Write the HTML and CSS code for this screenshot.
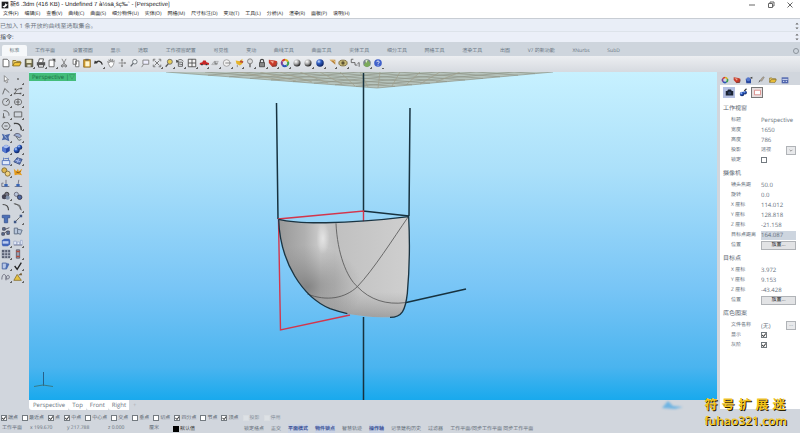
FILE: index.html
```html
<!DOCTYPE html>
<html lang="zh-CN">
<head>
<meta charset="utf-8">
<title>Undefined 7 - [Perspective]</title>
<link rel="stylesheet" href="styles.css">
</head>
<body>
<svg class="defs" aria-hidden="true">
  <defs>
    <radialGradient id="gray" cx=".35" cy=".3" r=".7"><stop offset="0" stop-color="#fff"/><stop offset=".5" stop-color="#aaa"/><stop offset="1" stop-color="#222"/></radialGradient>
    <radialGradient id="blue" cx=".35" cy=".3" r=".7"><stop offset="0" stop-color="#cfe0ff"/><stop offset=".4" stop-color="#2f5fc4"/><stop offset="1" stop-color="#0b2160"/></radialGradient>
    <symbol id="wheel" viewBox="0 0 12 12"><g fill="none" stroke-width="2.4"><path d="M6 2.2A3.8 3.8 0 0 1 9.5 4.5" stroke="#d8b21c"/><path d="M9.5 4.5A3.8 3.8 0 0 1 8 9.2" stroke="#3fa04c"/><path d="M8 9.2A3.8 3.8 0 0 1 3 8.4" stroke="#2d56b8"/><path d="M3 8.4A3.8 3.8 0 0 1 2.8 4" stroke="#7a3f96"/><path d="M2.8 4A3.8 3.8 0 0 1 6 2.2" stroke="#d33a2c"/></g></symbol>
    <symbol id="layers" viewBox="0 0 12 12"><path d="M1 2l7 1 3 1-1 6-5 .5L1 6z" fill="#c63b2b"/><path d="M2 3l5 1-1 3z" fill="#f0a58f"/><path d="M5 10l5-.5 1-4" fill="none" stroke="#5d3a38"/></symbol>
    <symbol id="folder" viewBox="0 0 12 12"><path d="M1 9.5V3h3.500l1 1H10v1.500" fill="#f3d774" stroke="#80671f"/><path d="M1 9.500l2-4h8l-2 4z" fill="#f5c83c" stroke="#80671f"/></symbol>
    <symbol id="lens" viewBox="0 0 12 12"><circle cx="7" cy="4.500" r="2.700" fill="#eef3f6" stroke="#62686e"/><path d="M5 6.500L2 10" stroke="#62686e" stroke-width="1.600"/></symbol>
  </defs>
</svg>

<header class="titlebar">
  <svg class="logo" viewBox="0 0 12 12"><path d="M1 1h10v10H1z" fill="#222"/><path d="M2 8c3 0 4-2 5-5l1 2 2 0-2 3-3 2z" fill="#fff"/></svg>
  <h1>新6 .3dm (416 KB) - Undefined 7 à½sä¸šç‰ˆ - [Perspective]</h1>
  <div class="winbtns">
    <button aria-label="Minimize"><svg viewBox="0 0 8 8"><path d="M1 4h6"/></svg></button>
    <button aria-label="Restore"><svg viewBox="0 0 8 8"><path d="M1.500 2.500h4v4h-4zM3 2V1h4v4H6"/></svg></button>
    <button aria-label="Close"><svg viewBox="0 0 8 8"><path d="M1.500 1.500l5 5M6.500 1.500l-5 5"/></svg></button>
  </div>
</header>

<nav class="menubar">
  <button>文件(F)</button><button>编辑(E)</button><button>查看(V)</button><button>曲线(C)</button><button>曲面(S)</button><button>细分物件(U)</button><button>实体(O)</button><button>网格(M)</button><button>尺寸标注(D)</button><button>变动(T)</button><button>工具(L)</button><button>分析(A)</button><button>渲染(R)</button><button>面板(P)</button><button>说明(H)</button>
</nav>

<section class="command">
  <div class="history"><p>已加入 1 条开放的曲线至选取集合。</p><svg class="spin" viewBox="0 0 4 10"><path d="M0 3l2-2 2 2zM0 7l2 2 2-2z"/></svg></div>
  <div class="prompt"><label for="cmd">指令:</label><input id="cmd" type="text"><svg class="spin" viewBox="0 0 4 10"><path d="M0 3l2-2 2 2zM0 7l2 2 2-2z"/></svg></div>
</section>

<nav class="tabbar">
  <button class="active">标准</button>
  <div class="tabs"><button>工作平面</button><button>设置视图</button><button>显示</button><button>选取</button><button>工作视窗配置</button><button>可见性</button><button>变动</button><button>曲线工具</button><button>曲面工具</button><button>实体工具</button><button>细分工具</button><button>网格工具</button><button>渲染工具</button><button>出图</button><button>V7 的新功能</button><button>XNurbs</button><button>SubD</button></div>
  <button class="gear" aria-label="Options"><svg viewBox="0 0 8 8"><circle cx="4" cy="4" r="2.500" fill="none" stroke="#8c949c"/></svg></button>
</nav>

<div class="toolbar">
  <div class="icons">
    <button aria-label="New"><svg viewBox="0 0 12 12"><path d="M2.500 1.500h5l2 2v7h-7z" fill="#fff" stroke="#555"/></svg></button>
    <button aria-label="Open"><svg><use href="#folder"/></svg></button>
    <button class="more" aria-label="Save"><svg viewBox="0 0 12 12"><path d="M1.500 1.500h9v9h-9z" fill="#77724d" stroke="#44453c"/><path d="M3 2h6v4H3z" fill="#e9e6c8"/><path d="M4 8h4v2.500H4z" fill="#ddd"/></svg></button>
    <button class="more" aria-label="Print"><svg viewBox="0 0 12 12"><path d="M3 5l1-4h5l-1 4" fill="#fff" stroke="#444"/><path d="M1 5h10v4H1z" fill="#555"/><path d="M3 8h6v3H3z" fill="#eee" stroke="#444"/></svg></button>
    <button class="more" aria-label="Properties"><svg viewBox="0 0 12 12"><path d="M2.500 2.500h6v8h-6z" fill="#fff" stroke="#555"/><path d="M6 1h4v4L8 3z" fill="#555"/></svg></button>
    <button aria-label="Cut"><svg viewBox="0 0 12 12"><path d="M3.500 1l4 7.500M8.500 1l-4 7.500" stroke="#777" fill="none"/><circle cx="4" cy="9.500" r="1.200" fill="none" stroke="#555"/><circle cx="8" cy="9.500" r="1.200" fill="none" stroke="#555"/></svg></button>
    <button aria-label="Copy"><svg viewBox="0 0 12 12"><path d="M2.500 1.500h4v6h-4zM5.500 3.500h4v7h-4z" fill="#fff" stroke="#666"/></svg></button>
    <button aria-label="Paste"><svg viewBox="0 0 12 12"><path d="M2 2h8v9H2z" fill="#d39c2a" stroke="#8f6c25"/><path d="M4 1h4v2H4z" fill="#666"/><path d="M4 4h5v6H4z" fill="#fff6cf"/></svg></button>
    <button class="more" aria-label="Undo"><svg viewBox="0 0 12 12"><path d="M2 6c3-4 7-2 8 2" fill="none" stroke="#333" stroke-width="1.500"/><path d="M0 7l1-4 4 3z" fill="#333"/></svg></button>
    <button aria-label="Pan"><svg viewBox="0 0 12 12"><path d="M3 7L2 4l2 2-.5-4L5.500 5V1l1.500 4 1-3.500V5l2-2-1 5-2 3H5z" fill="#fff" stroke="#777" stroke-width=".8"/></svg></button>
    <button aria-label="Rotate view"><svg viewBox="0 0 12 12"><path d="M6 1.500v9M2 6h8" stroke="#888"/><path d="M4.500 3L6 1l1.500 2zM4.500 9L6 11l1.500-2zM9 4.500L11 6 9 7.500z" fill="#777"/></svg></button>
    <button aria-label="Zoom dynamic"><svg><use href="#lens"/></svg></button>
    <button aria-label="Zoom window"><svg viewBox="0 0 12 12"><path d="M3.500 2.500h7v5h-7zM4 8l-2 3" fill="#eef" stroke="#777"/></svg></button>
    <button class="more" aria-label="Zoom extents"><svg viewBox="0 0 12 12"><path d="M1.500 4V1.500H4M8 1.500h2.500V4M10.500 8v2.500H8M4 10.500H1.500V8M3 9l6-6M3 3l6 6" fill="none" stroke="#666"/></svg></button>
    <button class="more" aria-label="Zoom selected"><svg viewBox="0 0 12 12"><circle cx="7" cy="4.500" r="3" fill="#e5cc56" stroke="#666"/><path d="M5 7l-3 3.500" stroke="#555" stroke-width="1.600"/></svg></button>
    <button class="more" aria-label="Undo view"><svg viewBox="0 0 12 12"><path d="M2 5c2-4 6-4 8-1M4 5h5v5H4zM4 7l5 1" fill="none" stroke="#555"/><path d="M1 2l1 4 3-2z" fill="#444"/></svg></button>
    <button class="more" aria-label="Four viewports"><svg viewBox="0 0 12 12"><path d="M1.500 1.500h9v9h-9zM6 1.500v9M1.500 6h9" fill="#f3f3f3" stroke="#444"/></svg></button>
    <button class="more" aria-label="Right view"><svg viewBox="0 0 12 12"><path d="M1 6l3-1 1-2h3l1 2 3 1v2H1z" fill="#c62525"/><path d="M2.500 8h2M8 8h2" stroke="#333" stroke-width="1.500"/></svg></button>
    <button class="more" aria-label="CPlane"><svg viewBox="0 0 12 12"><path d="M2 8l3-4h5L8 8z" fill="#c9ccd0" stroke="#999" stroke-width=".6"/><path d="M6 4v3h3" fill="none" stroke="#666"/></svg></button>
    <button class="more" aria-label="Object snap"><svg viewBox="0 0 12 12"><circle cx="5.500" cy="6" r="4" fill="#f1f1f1" stroke="#999"/><path d="M4 6h7" stroke="#777"/></svg></button>
    <button class="more" aria-label="Select"><svg viewBox="0 0 12 12"><path d="M2 3l5 1 3-3v6L7 9 3 7z" fill="#e6b429"/><path d="M7 4l4 1" stroke="#bb4a34" stroke-width="2"/><path d="M4 8v3" stroke="#888"/></svg></button>
    <button class="more" aria-label="Lights"><svg viewBox="0 0 12 12"><circle cx="6" cy="4" r="3" fill="#ddd" stroke="#777"/><path d="M5 7h2v4H5z" fill="#777"/></svg></button>
    <button class="more" aria-label="Lock"><svg viewBox="0 0 12 12"><path d="M4 6V3.500C4 1 8 1 8 3.500V6" fill="none" stroke="#444" stroke-width="1.300"/><path d="M3 5.500h6v5H3z" fill="#888" stroke="#444"/></svg></button>
    <button class="more" aria-label="Layers"><svg><use href="#layers"/></svg></button>
    <button class="more" aria-label="Colors"><svg><use href="#wheel"/></svg></button>
    <button aria-label="Shade"><svg viewBox="0 0 12 12"><circle cx="6" cy="6" r="4.200" fill="url(#gray)"/></svg></button>
    <button class="more" aria-label="Shade selected"><svg viewBox="0 0 12 12"><circle cx="6" cy="6" r="4.200" fill="url(#gray)"/></svg></button>
    <button class="more" aria-label="Render"><svg viewBox="0 0 12 12"><circle cx="6" cy="6" r="4.500" fill="url(#blue)"/></svg></button>
    <button class="more" aria-label="Spotlight"><svg viewBox="0 0 12 12"><path d="M3 2h7v6z" fill="#b9853f"/><path d="M4 2.500h4l2 3" fill="none" stroke="#efd294"/></svg></button>
    <button class="more" aria-label="Options"><svg viewBox="0 0 12 12"><ellipse cx="6" cy="6" rx="5" ry="3.500" fill="#c5b877" stroke="#77683c"/><circle cx="6" cy="6" r="2" fill="#5d5334"/></svg></button>
    <button aria-label="Dimension"><svg viewBox="0 0 12 12"><path d="M4 1.500H1.500v4H6v3h3M9 6.500l2-1v5" fill="none" stroke="#555"/></svg></button>
    <button class="more" aria-label="Earth"><svg viewBox="0 0 12 12"><circle cx="6" cy="6" r="4.600" fill="#7b8791"/><path d="M2 9l4-7 3 3 1 4-4 2z" fill="#7cab5c"/><path d="M4 3l3-1-2 4z" fill="#e9eddc"/></svg></button>
    <button class="more" aria-label="Help"><svg viewBox="0 0 12 12"><circle cx="6" cy="6" r="4.600" fill="#4060ca"/><path d="M4.500 5c0-2 3-2 3 0 0 1-1.500 1-1.500 2M6 8v1.200" fill="none" stroke="#fff"/></svg></button>
  </div>
</div>

<main>
  <aside class="tools">
    <div class="icons">
      <button aria-label="Select"><svg viewBox="0 0 12 12"><path d="M4 2l5 5H6.500l1.500 3-1.500.5L5 7.500 4 9z" fill="#fff" stroke="#666" stroke-width=".8"/></svg></button>
      <button class="more" aria-label="Point"><svg viewBox="0 0 12 12"><circle cx="6" cy="6" r="1.100" fill="#666"/></svg></button>
      <button class="more" aria-label="Polyline"><svg viewBox="0 0 12 12"><path d="M2 10l2.500-7L10 8" fill="none" stroke="#555"/></svg></button>
      <button class="more" aria-label="Curve"><svg viewBox="0 0 12 12"><path d="M2 9c2-1 1-6 8-6M3 9h6" fill="none" stroke="#555"/><path d="M1 8h2v2H1zM9 2h2v2H9zM2 3h2v2H2zM8 8h2v2H8z" fill="#555"/></svg></button>
      <button class="more" aria-label="Circle"><svg viewBox="0 0 12 12"><circle cx="6" cy="6" r="4.200" fill="none" stroke="#666"/><path d="M6 6l3-3" stroke="#555"/></svg></button>
      <button class="more" aria-label="Ellipse"><svg viewBox="0 0 12 12"><ellipse cx="6" cy="6" rx="4.500" ry="3.500" fill="none" stroke="#666"/><path d="M6 2v8M3 6h5" stroke="#555"/></svg></button>
      <button class="more" aria-label="Arc"><svg viewBox="0 0 12 12"><path d="M3 2c5-.5 7 3 6.500 6M3 10V5" fill="none" stroke="#555"/><path d="M2 9h3v2H2z" fill="#777"/></svg></button>
      <button class="more" aria-label="Rectangle"><svg viewBox="0 0 12 12"><path d="M1.500 3.500h9v6h-9z" fill="none" stroke="#555"/></svg></button>
      <button class="more" aria-label="Polygon"><svg viewBox="0 0 12 12"><path d="M3.500 2h5L11 6l-2.500 4h-5L1 6zM4 6h4" fill="none" stroke="#555"/></svg></button>
      <button class="more" aria-label="Fillet curve"><svg viewBox="0 0 12 12"><path d="M1 3c6-1 9 2 9 8" fill="none" stroke="#444" stroke-width="1.600"/></svg></button>
      <button class="more" aria-label="Surface"><svg viewBox="0 0 12 12"><path d="M1 2l4 1.500L11 2 9 6l1 5-5-2-4 1 1.500-4z" fill="#4a68a8"/><path d="M4 4l3 4" stroke="#b9caee"/></svg></button>
      <button class="more" aria-label="Loft"><svg viewBox="0 0 12 12"><path d="M1 4c3-4 8-2 9 1L8 7z" fill="#9db0d5" stroke="#556"/><path d="M4 6l3 4 3-1" fill="none" stroke="#566"/></svg></button>
      <button class="more" aria-label="Box"><svg viewBox="0 0 12 12"><path d="M1.500 3.500L6 1l4.500 2v5.500L6 11 1.500 8.500z" fill="#2848a8"/><path d="M1.500 3.500L6 1l4.500 2L6 5.500z" fill="#a9beee"/><path d="M1.500 3.500L6 5.500V11L1.500 8.500z" fill="#5578d0"/></svg></button>
      <button class="more" aria-label="Boolean"><svg viewBox="0 0 12 12"><circle cx="4.500" cy="7.500" r="3.500" fill="url(#blue)"/><circle cx="8" cy="4" r="3" fill="url(#blue)"/></svg></button>
      <button class="more" aria-label="Extrude"><svg viewBox="0 0 12 12"><path d="M1.500 5.500h9v5h-9z" fill="#e1eafa" stroke="#4266b8"/><path d="M4 3h5M3 2v3M9 2v3" stroke="#5775bd"/></svg></button>
      <button class="more" aria-label="Mesh surface"><svg viewBox="0 0 12 12"><path d="M1 7l4-5 6 2-3 6z" fill="#6079bb" stroke="#304779"/><path d="M3 5l6 2M7 3L5 8" stroke="#b7c6ee"/></svg></button>
      <button class="more" aria-label="Trim"><svg viewBox="0 0 12 12"><circle cx="4" cy="4" r="3" fill="#ddb44c" stroke="#7b6530"/><circle cx="8" cy="8" r="3" fill="#f0d280" stroke="#7b6530"/></svg></button>
      <button aria-label="Explode"><svg viewBox="0 0 12 12"><path d="M1 2l3 3 2-3 1 3 4-3-2 5 2 3-5-1-4 1z" fill="#e59b1d"/><path d="M4 6l3 1 2-2" stroke="#704a13" fill="none"/></svg></button>
      <button aria-label="Join"><svg viewBox="0 0 12 12"><path d="M6 1v6M3 5H1v4h9" fill="none" stroke="#667"/><path d="M4 6h4v3H4z" fill="#3765b6"/></svg></button>
      <button aria-label="Split"><svg viewBox="0 0 12 12"><path d="M7 1L6 7M2 9h9" fill="none" stroke="#667"/><path d="M4 6h4v3H4z" fill="#3765b6"/></svg></button>
      <button class="more" aria-label="Group"><svg viewBox="0 0 12 12"><circle cx="4" cy="7" r="3" fill="#445"/><circle cx="7" cy="4" r="2.500" fill="#778" stroke="#333"/><circle cx="8" cy="8" r="2.500" fill="#8192ab"/></svg></button>
      <button aria-label="Ungroup"><svg viewBox="0 0 12 12"><circle cx="4" cy="4" r="2.500" fill="#b8c4d9" stroke="#667"/><circle cx="8" cy="7.500" r="2.700" fill="#4c65a0" stroke="#334"/></svg></button>
      <button aria-label="Edit points"><svg viewBox="0 0 12 12"><path d="M2 3c5 0 7 3 7 7" fill="none" stroke="#444" stroke-width="1.300"/></svg></button>
      <button class="more" aria-label="Control points"><svg viewBox="0 0 12 12"><path d="M1 2l7 2 2 6M2 2c4 1 6 3 7 7" fill="none" stroke="#555"/></svg></button>
      <button aria-label="Text"><svg viewBox="0 0 12 12"><path d="M1.500 1.500h9v3H8v6H4v-6H1.500z" fill="#4c70b8" stroke="#395591"/></svg></button>
      <button class="more" aria-label="Move"><svg viewBox="0 0 12 12"><path d="M3 9l5-5" stroke="#555"/><path d="M1 8h3v3H1zM8 1h3v3H8z" fill="#3e5684"/></svg></button>
      <button aria-label="Copy objects"><svg viewBox="0 0 12 12"><path d="M2 2h3v3H2zM7 6h3v4H7zM1 8h3v3H1z" fill="#6078a1" stroke="#445"/><path d="M5 4l5-2M4 9l3-3" stroke="#445"/></svg></button>
      <button aria-label="Rotate"><svg viewBox="0 0 12 12"><path d="M1.500 2.500h4v7h-4zM6 4l5 1-2 5-3-1" fill="#b9c7dc" stroke="#55657b"/></svg></button>
      <button class="more" aria-label="Solid edit"><svg viewBox="0 0 12 12"><path d="M1 4l3-2h6l1 2v5l-3 2H2L1 9z" fill="#4366b9"/><path d="M2 5h7v3H2z" fill="#bdcdf0"/></svg></button>
      <button class="more" aria-label="Align"><svg viewBox="0 0 12 12"><path d="M1 9.500h10" stroke="#446"/><path d="M1 5h3v4H1zM5 6h3v3H5zM9 4h2v5H9z" fill="#edf2fe" stroke="#8999bf" stroke-width=".7"/></svg></button>
      <button class="more" aria-label="Array"><svg viewBox="0 0 12 12"><path d="M1 1h10v10H1z" fill="#596073"/><path d="M1 4.500h10M1 8h10M4.500 1v10M8 1v10" stroke="#c0c7d4"/></svg></button>
      <button class="more" aria-label="Analyze"><svg viewBox="0 0 12 12"><path d="M4 1h4v10H4z" fill="#96a1b4" stroke="#556"/><path d="M4 2h4v2H4zM4 8h4v2H4z" fill="#b64b39"/></svg></button>
      <button class="more" aria-label="Drawing"><svg viewBox="0 0 12 12"><path d="M1.500 2.500h5v7h-5z" fill="#b7c7e8" stroke="#3f5d9c"/><path d="M5 9l3-7 2 2-3 6z" fill="#4d6eb4"/></svg></button>
      <button class="more" aria-label="Check"><svg viewBox="0 0 12 12"><path d="M2 6l3 4 5-8" fill="none" stroke="#222" stroke-width="1.600"/></svg></button>
      <button class="more" aria-label="Curve tools"><svg viewBox="0 0 12 12"><path d="M1 9c0-7 4-8 5-3v4M6 9c0-6 4-6 4-3s-3 3-3 1" fill="none" stroke="#667"/></svg></button>
      <button class="more" aria-label="Annotate"><svg viewBox="0 0 12 12"><path d="M1 10l4-7 5 7z" fill="#e6c241" stroke="#8b7430"/><path d="M6 4l4-3 1 3z" fill="#755d33"/></svg></button>
    </div>
  </aside>

  <section class="center">
    <div class="viewport">
      <button class="viewname">Perspective |▽</button>
      <svg class="scene" viewBox="29 72 688 328" preserveAspectRatio="xMidYMin slice">
        <defs>
          <linearGradient id="hull" x1="0" x2="1" y1="0" y2="0"><stop offset="0" stop-color="#999"/><stop offset=".2" stop-color="#b0b0b0"/><stop offset=".32" stop-color="#cbcbcb"/><stop offset=".43" stop-color="#c0c0c0"/><stop offset="1" stop-color="#cfcfcf"/></linearGradient>
          <radialGradient id="shade" cx=".22" cy=".7" r=".42"><stop offset="0" stop-color="#747474" stop-opacity=".75"/><stop offset="1" stop-color="#888" stop-opacity="0"/></radialGradient>
          <linearGradient id="base" x1="0" x2="0" y1="0" y2="1"><stop offset=".75" stop-color="#888" stop-opacity="0"/><stop offset="1" stop-color="#777" stop-opacity=".5"/></linearGradient>
          <radialGradient id="shine"><stop offset="0" stop-color="#fff" stop-opacity=".5"/><stop offset="1" stop-color="#fff" stop-opacity="0"/></radialGradient>
        </defs>
        <path d="M166 72L377 88 553 72z" fill="#b7c4bd"/>
        <g stroke="#8f9588" stroke-width=".7" fill="none">
          <path d="M166 72L377 88 553 72M205 72L395 86.400M243 72L412 84.800M282 72L430 83.200M321 72L447 81.600M359 72L465 80M398 72L483 78.400M437 72L500 76.800M476 72L518 75.200M514 72L535 73.600"/>
          <path d="M514 72L356 86.400M476 72L335 84.800M437 72L314 83.200M398 72L293 81.600M359 72L271 80M321 72L250 78.400M282 72L229 76.800M243 72L208 75.200"/>
          <path stroke="#a09f8b" d="M240 72l40 8M260 72l36 9M280 72l32 10M300 72l28 11M320 72l22 12M340 72l15 14M360 72l8 15M380 72l-2 16M400 72l-8 14M420 72l-14 13M440 72l-20 12M460 72l-24 10"/>
        </g>
        <g fill="none" stroke="#17323f" stroke-width="1.500">
          <path d="M363.500 73V212M363.500 317V400M276.500 103L278 219M410 108L409 216M363 211L409 216"/>
          <path d="M404 303L466 289"/>
        </g>
        <path d="M350 315L280.500 330 278.500 219 363.500 211V222" fill="none" stroke="#d3364c" stroke-width="1.400"/>
        <g transform="translate(250 190) scale(.33333)">
          <g>
            <path d="M86 88C140 102 280 104 476 80C479 140 480 220 472 310C466 362 456 382 420 382C350 382 290 374 240 356C160 322 90 220 86 88z" fill="url(#hull)"/>
            <path d="M86 88C140 102 280 104 476 80C479 140 480 220 472 310C466 362 456 382 420 382C350 382 290 374 240 356C160 322 90 220 86 88z" fill="url(#shade)"/>
            <path d="M86 88C140 102 280 104 476 80C479 140 480 220 472 310C466 362 456 382 420 382C350 382 290 374 240 356C160 322 90 220 86 88z" fill="url(#base)"/>
          </g>
          <ellipse cx="219" cy="145" rx="20" ry="48" fill="url(#shine)"/>
          <g fill="none" stroke="#555" stroke-width="2.500">
            <path d="M258 100C262 190 290 262 322 290C360 330 410 345 465 338"/>
            <path d="M172 312C230 335 285 325 322 290C370 240 430 145 475 80"/>
          </g>
          <g fill="none" stroke="#1a3442" stroke-width="4">
            <path d="M86 88C140 102 280 104 476 80C479 140 480 220 472 310C466 362 456 382 420 382"/>
            <path d="M86 88C90 220 160 322 240 356C260 363 275 367 292 371"/>
          </g>
        </g>
        <path d="M43.500 372V386" stroke="#27608a" fill="none"/><path d="M34 386.500L43 385 53 386.500" stroke="#397a86" fill="none"/>
      </svg>
    </div>
    <div class="viewtabs">
      <button>Perspective</button><button>Top</button><button>Front</button><button>Right</button><button class="add" aria-label="Add">+</button>
      <svg class="cursor" viewBox="0 0 24 10"><path d="M1 8l6-7 5 5 10 1-8 2z" fill="#6fb4e2"/></svg>
    </div>
  </section>

  <aside class="panel">
    <div class="paneltabs">
      <button aria-label="Colors"><svg><use href="#wheel"/></svg></button>
      <button aria-label="Layers"><svg><use href="#layers"/></svg></button>
      <button aria-label="Render"><svg viewBox="0 0 12 12"><path d="M1 4h8v7H2z" fill="#2848a0"/><circle cx="5" cy="5" r="3" fill="#5677cb"/><path d="M7 3l4-2v3z" fill="#333"/></svg></button>
      <button aria-label="Material"><svg viewBox="0 0 12 12"><path d="M2 10l2-4 2 1z" fill="#555"/><path d="M5 6l4-5 2 1-4 6z" fill="#b2a48d" stroke="#777" stroke-width=".7"/></svg></button>
      <button aria-label="Libraries"><svg><use href="#folder"/></svg></button>
      <button aria-label="Display"><svg viewBox="0 0 12 12"><path d="M1 2h10v9H1z" fill="#4f65ad"/><path d="M2 5h8M3 8h2M7 8h2" stroke="#dce3f8" stroke-width="1.500"/></svg></button>
    </div>
    <div class="props">
      <div class="modes">
        <button class="on" aria-label="Camera"><svg viewBox="0 0 12 12"><path d="M1 4h2l1-2h4l1 2h2v6H1z" fill="#1c2434"/><circle cx="6" cy="6.500" r="2" fill="#33456b"/></svg></button>
        <button aria-label="Texture"><svg viewBox="0 0 12 12"><circle cx="4" cy="8" r="3" fill="url(#blue)"/><circle cx="8" cy="6" r="2.500" fill="url(#blue)"/><path d="M7 4l3-3" stroke="#333" stroke-width="1.500"/></svg></button>
        <button class="frame" aria-label="Frame"><svg viewBox="0 0 12 12"><path d="M2 3h8v6H2z" fill="#fff" stroke="#d77874"/></svg></button>
      </div>
      <h2>工作视窗</h2>
      <div class="row"><label for="p1">标题</label><input id="p1" type="text" value="Perspective"></div>
      <div class="row"><label for="p2">宽度</label><input id="p2" type="text" value="1650"></div>
      <div class="row"><label for="p3">高度</label><input id="p3" type="text" value="786"></div>
      <div class="row"><label for="p4">投影</label><div class="pick"><select id="p4"><option>透视</option><option>平行</option></select><svg viewBox="0 0 10 10"><path d="M3 4l2 2 2-2" fill="none" stroke="#777"/></svg></div></div>
      <div class="row"><label for="p5">锁定</label><input id="p5" type="checkbox"></div>
      <h2>摄像机</h2>
      <div class="row"><label for="p6">镜头焦距</label><input id="p6" type="text" value="50.0"></div>
      <div class="row"><label for="p7">旋转</label><input id="p7" type="text" value="0.0"></div>
      <div class="row"><label for="p8">X 座标</label><input id="p8" type="text" value="114.012"></div>
      <div class="row"><label for="p9">Y 座标</label><input id="p9" type="text" value="128.818"></div>
      <div class="row"><label for="p10">Z 座标</label><input id="p10" type="text" value="-21.158"></div>
      <div class="row"><label for="p11">目标点距离</label><input id="p11" class="locked" type="text" value="164.087" readonly></div>
      <div class="row"><label for="p12">位置</label><button id="p12" class="place">放置...</button></div>
      <h2>目标点</h2>
      <div class="row"><label for="p13">X 座标</label><input id="p13" type="text" value="3.972"></div>
      <div class="row"><label for="p14">Y 座标</label><input id="p14" type="text" value="9.153"></div>
      <div class="row"><label for="p15">Z 座标</label><input id="p15" type="text" value="-43.428"></div>
      <div class="row"><label for="p16">位置</label><button id="p16" class="place">放置...</button></div>
      <h2>底色图案</h2>
      <div class="row"><label for="p17">文件名称</label><div class="pick"><input id="p17" type="text" value="(无)"><button aria-label="Browse">...</button></div></div>
      <div class="row"><label for="p18">显示</label><input id="p18" type="checkbox" checked></div>
      <div class="row"><label for="p19">灰阶</label><input id="p19" type="checkbox" checked></div>
    </div>
  </aside>
</main>

<div class="osnap">
  <div class="snaps">
    <label><input type="checkbox" checked>端点</label><label><input type="checkbox">最近点</label><label><input type="checkbox" checked>点</label><label><input type="checkbox" checked>中点</label><label><input type="checkbox">中心点</label><label><input type="checkbox">交点</label><label><input type="checkbox">垂点</label><label><input type="checkbox">切点</label><label><input type="checkbox" checked>四分点</label><label><input type="checkbox">节点</label><label><input type="checkbox" checked>顶点</label><label class="off"><input type="checkbox" disabled>投影</label><label class="off"><input type="checkbox" disabled>停用</label>
  </div>
</div>

<footer class="status">
  <div class="coords"><span>工作平面</span><span>x 199.670</span><span>y 217.788</span><span>z 0.000</span><span>厘米</span><span class="layer"><i></i>默认值</span></div>
  <div class="toggles"><button>锁定格点</button><button>正交</button><button class="on">平面模式</button><button class="on">物件锁点</button><button>智慧轨迹</button><button class="on">操作轴</button><button>记录建构历史</button><button>过滤器</button><button>工作平面/同步工作平面 同步工作平面</button></div>
</footer>

<div class="credit"><div class="zh"><span>符</span><span>号</span><span>扩</span><span>展</span><span>迷</span></div><div class="url">fuhao321.com</div></div>
</body>
</html>
```
FILE: styles.css
```css
* { box-sizing: border-box; }
body {
  margin: 0;
  min-height: 100vh;
  display: flex;
  flex-direction: column;
  background: #d1d6dd;
  color: #66707b;
  font-family: "Open Sans", "Noto Sans CJK SC", sans-serif;
  font-size: 5px;
  line-height: 8px;
  text-rendering: geometricPrecision;
  overflow: hidden;
}
button, input, select {
  font: inherit;
  color: inherit;
  text-rendering: inherit;
  background: none;
  border: 0;
  border-radius: 0;
  padding: 0;
  margin: 0;
  min-width: 0;
  appearance: none;
  outline: 0;
}
button { white-space: nowrap; }
svg { display: block; }
h1, h2, p { margin: 0; font-weight: 400; }
.defs { position: absolute; width: 0; height: 0; }

.titlebar {
  display: flex;
  align-items: center;
  gap: 1px;
  height: 10px;
  padding: 0 6px 0 1px;
  background: #fff;
  color: #222;
}
.titlebar h1 {
  font-family: "Liberation Sans", "Noto Sans CJK SC", sans-serif;
  font-size: 6px;
  line-height: 10px;
  white-space: nowrap;
}
.logo { width: 8px; height: 8px; }
.winbtns { display: flex; gap: 11px; margin-left: auto; }
.winbtns svg { width: 8px; height: 8px; fill: none; stroke: #666; stroke-width: 1; }

.menubar {
  display: flex;
  gap: 6px;
  height: 8px;
  padding-left: 3px;
  background: #fff;
  color: #222;
}

.command { background: #e9eef7; color: #6b747d; font-size: 6px; }
.history, .prompt { display: flex; align-items: center; padding-right: 1px; }
.history { height: 14px; padding-top: 2px; border-top: 1px solid #c8cdd4; border-bottom: 1px solid #dde3ea; }
.history p { flex: 1; }
.prompt { height: 10px; background: #ebeff8; color: #3c444c; }
.prompt input { flex: 1; }
.spin { width: 4px; height: 8px; fill: #666; }

.tabbar {
  display: flex;
  align-items: flex-end;
  gap: 8px;
  height: 14px;
  padding-left: 2px;
  background: #ced5dd;
  color: #697683;
}
.tabbar button { height: 11px; }
.tabbar .active { width: 25px; background: #f6f8fa; border-radius: 2px 2px 0 0; }
.tabs { display: flex; justify-content: space-between; width: 73.3%; }
.gear { margin-left: auto; }
.gear svg { width: 8px; height: 8px; }

.toolbar { height: 16px; background: linear-gradient(#eceef1, #d6dae0); }
.icons button { display: grid; place-items: center; }
.icons svg { width: 10px; height: 10px; }
.toolbar .icons {
  display: grid;
  grid-template-columns: repeat(33, 1fr);
  width: 48%;
  padding-top: 1px;
}
.icons button { height: 12px; }
.icons .more { background: linear-gradient(135deg, transparent 50%, #666 50%) right bottom / 2px 2px no-repeat; }

main {
  flex: 1;
  display: grid;
  grid-template-columns: 29px 1fr 83px;
  min-height: 0;
}
.tools { padding-top: 1px; background: #d1d6dd; }
.tools .icons {
  display: grid;
  grid-template-columns: 1fr 1fr;
  grid-template-rows: repeat(18, 1fr);
  height: 62%;
  padding-right: 5px;
}
.tools .icons button { height: auto; min-height: 0; }

.center { display: flex; flex-direction: column; min-width: 0; }
.viewport {
  position: relative;
  flex: 1;
  min-height: 0;
  background: linear-gradient(#c7f1ff, #abe0fa 30%, #78c5f6 66%, #4ab4ef 90%, #18a9ed);
}
.scene { position: absolute; inset: 0; width: 100%; height: 100%; }
.viewname {
  position: absolute;
  z-index: 1;
  top: 1px;
  left: 0;
  padding: 0 1px 0 3px;
  background: #44bd7b;
  color: #1b6d45;
  font-size: 6px;
}
.viewtabs { display: flex; height: 12px; padding-bottom: 2px; font-size: 6px; }
.viewtabs button { padding: 0 3px 0 4px; background: #fff; border-radius: 0 0 0 3px; }
.viewtabs .add { background: none; color: #a8adb3; }
.cursor { width: 24px; height: 10px; margin: 0 32px 0 auto; filter: blur(1px); }

.panel { padding-left: 3px; display: flex; flex-direction: column; margin-bottom: 3px; }
.paneltabs { display: flex; gap: 4px; height: 13px; align-items: center; padding: 3px 0 0 1px; }
.paneltabs svg { width: 8px; height: 8px; }
.props { flex: 1; background: #fff; padding: 2px 4px 0 3px; }
.modes { display: flex; gap: 2px; height: 13px; }
.modes button { width: 12px; height: 11px; display: grid; place-items: center; }
.modes svg { width: 9px; height: 9px; }
.modes .on { background: #b5c0e2; }
.modes .frame { border: 1px solid #777; background: #e8dede; }
.props h2 { font-size: 6px; line-height: 10px; height: 15px; padding-top: 3px; color: #59636f; }
.row {
  display: grid;
  grid-template-columns: 30px 1fr;
  align-items: center;
  height: 10px;
  padding-left: 8px;
}
.row label { white-space: nowrap; }
.row input, .row select { width: 100%; font-size: 6px; }
.row select { font-size: 5px; }
.row input[type="text"], .row select { height: 9px; }
.row .locked { background: #cdd5df; }
.place { height: 9px; background: #e2e3e5; border: 1px solid #b0b3b7; color: #222; line-height: 7px; }
.pick { display: grid; grid-template-columns: 1fr 10px; align-items: center; }
.pick svg, .pick button { width: 10px; height: 9px; background: #e8e9eb; border: 1px solid #b0b3b7; line-height: 6px; }

input[type="checkbox"] {
  flex: none;
  width: 6px;
  height: 6px;
  border: 1px solid #737a80;
  background: #fff;
}
.row input[type="checkbox"] { width: 6px; }
input[type="checkbox"]:checked::before {
  content: "";
  display: block;
  width: 4px;
  height: 4px;
  background: #333;
  clip-path: polygon(0 40%, 40% 70%, 90% 0, 100% 25%, 45% 100%, 0 70%);
}
.osnap { height: 12px; padding: 2px 0 0 1px; color: #5d6873; }
.snaps { display: flex; justify-content: space-between; width: 35%; }
.snaps label { display: flex; align-items: center; gap: 1px; white-space: nowrap; }
.snaps .off { color: #8b949d; }
.snaps .off input { border-color: #d9dde1; background: #dde1e5; }

.status { display: flex; height: 9px; padding-left: 2px; white-space: nowrap; }
.coords { display: grid; grid-template-columns: 28px 37px 41px 41px 24px 71px; }
.layer { display: flex; align-items: center; gap: 1px; color: #444; }
.layer i { width: 6px; height: 6px; background: #000; }
.toggles { display: flex; gap: 7px; }
.toggles .on { color: #3b5296; font-weight: 700; background: #c9d2e4; }

.credit {
  position: absolute;
  right: 13px;
  bottom: 5px;
  color: #f3c51c;
  text-shadow: 1px 1px 0 #2a2105;
}
.zh { display: flex; gap: 4px; font-size: 13px; line-height: 20px; font-weight: 700; }
.url { font-size: 12px; line-height: 14px; font-weight: 600; }
```
